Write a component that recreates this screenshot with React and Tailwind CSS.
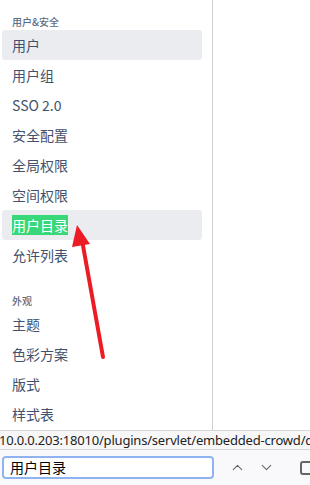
import { ChevronUp, ChevronDown } from 'lucide-react';

const sections = [
    {
        title: '用户&安全',
        items: ['用户', '用户组', 'SSO 2.0', '安全配置', '全局权限', '空间权限', '用户目录', '允许列表'],
    },
    {
        title: '外观',
        items: ['主题', '色彩方案', '版式', '样式表'],
    },
];

const active = ['用户', '用户目录'];

const App = () => {
    return (
        <div className="w-[310px] h-[485px] bg-white flex flex-col overflow-hidden relative" style={{ fontFamily: '"Noto Sans CJK SC", "Noto Sans", sans-serif' }}>
            {/* Page */}
            <div className="flex h-[430px] overflow-hidden">
                <aside className="w-[212px] shrink-0 pl-[2px] pr-[10px] pt-[13px]">
                    {sections.map((section, i) => (
                        <div key={section.title} className={i > 0 ? 'mt-[22px]' : ''}>
                            <div className="h-[17px] pl-[10px] text-[10px] leading-[17px] font-medium text-[#5e6c84]">{section.title}</div>
                            {section.items.map(item => (
                                <div
                                    key={item}
                                    className={`h-[30px] pl-[10px] flex items-center rounded-[3px] text-[14px] text-[#42526e] ${active.includes(item) ? 'bg-[#ebecf0]' : ''}`}
                                >
                                    {item === '用户目录' ? (
                                        <span className="bg-[#38d878] text-white leading-[20px]">{item}</span>
                                    ) : item}
                                </div>
                            ))}
                        </div>
                    ))}
                </aside>
                <div className="w-px bg-[#d0d0d0]" />
                <div className="flex-1" />
            </div>

            {/* Status bar */}
            <div className="h-[20px] border-t border-b border-[#d6d6d6] bg-[#f7f7f7] overflow-hidden -ml-[1px]">
                <div className="w-[330px] whitespace-nowrap text-[13px] tracking-[-0.2px] leading-[18px] text-[#222]" style={{ fontFamily: '"Noto Sans", sans-serif' }}>
                    10.0.0.203:18010/plugins/servlet/embedded-crowd/dir
                </div>
            </div>

            {/* Find bar */}
            <div className="flex-1 bg-[#f9f9fb] flex items-center pl-[2px] overflow-hidden">
                <div className="w-[212px] h-[23px] shrink-0 border-2 border-[#8fb3f0] rounded-[4px] bg-white flex items-center pl-[6px] text-[14px] text-black">
                    用户目录
                </div>
                <div className="flex items-center ml-[15px] text-[#666] shrink-0">
                    <ChevronUp className="w-[17px] h-[17px] shrink-0" strokeWidth={1.5} />
                    <ChevronDown className="w-[17px] h-[17px] shrink-0 ml-[12px]" strokeWidth={1.5} />
                    <div className="w-[14px] h-[14px] border-2 border-[#666] rounded-[3px] ml-[25px] shrink-0" />
                </div>
            </div>

            {/* Annotation arrow */}
            <svg className="absolute left-0 top-0 pointer-events-none" width="310" height="485">
                <line x1="103" y1="357" x2="82" y2="240" stroke="#ec1c24" strokeWidth="4" strokeLinecap="round" />
                <polygon points="77,225 90,244 72,247" fill="#ec1c24" />
            </svg>
        </div>
    );
};

export default App;
